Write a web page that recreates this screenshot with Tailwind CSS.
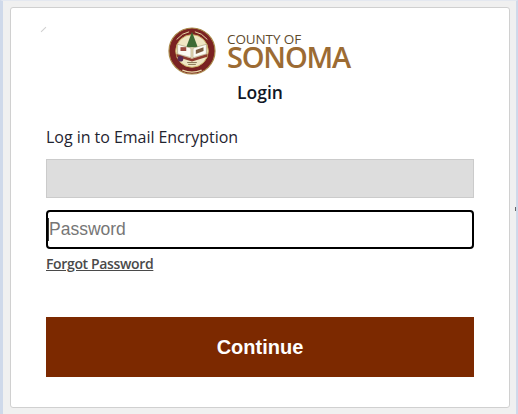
<!DOCTYPE html>
<html>
<head>
<meta charset="utf-8">
<script src="https://cdn.jsdelivr.net/npm/@tailwindcss/browser@4"></script>
</head>
<body class="m-0 bg-[#f0f0f0]">
<div class="relative flex h-[414px] w-[518px] overflow-hidden border-l-[3px] border-r-[2px] border-t-[1px] border-l-[#cfd9ea] border-r-[#cfd9ea] border-t-[#e4e8f0] pl-[7px] pr-[6px] pt-[6px] font-['Open_Sans',sans-serif]">
  <main class="flex h-[401px] w-[500px] flex-col rounded-[3px] border border-[#d0d0d0] bg-white px-[35px]">
    <div class="mt-[17px] flex h-[52px] items-center justify-center gap-[11px]">
      <svg class="h-[48px] w-[48px] shrink-0" viewBox="0 0 50 50">
        <defs><filter id="b" x="-10%" y="-10%" width="120%" height="120%"><feGaussianBlur stdDeviation="0.45"/></filter></defs>
        <g filter="url(#b)">
          <circle cx="25" cy="25" r="24" fill="#7a2420"/>
          <circle cx="25" cy="25" r="24" fill="none" stroke="#a98a4a" stroke-width="1.2"/>
          <circle cx="25" cy="25" r="17" fill="#efe6c4" stroke="#c9ad62" stroke-width="1"/>
          <path d="M25 5 L31 21 H19 Z" fill="#3d6b35"/>
          <path d="M10 18 L24 22 V32 L10 28 Z" fill="#fbfaf3" stroke="#8d7b55" stroke-width=".5"/>
          <path d="M40 18 L26 22 V32 L40 28 Z" fill="#fbfaf3" stroke="#8d7b55" stroke-width=".5"/>
          <rect x="13" y="21" width="6" height="4" fill="#9a4b40"/>
          <path d="M29 24 L37 21 V25 L29 28 Z" fill="#7b5b40"/>
          <path d="M9 28 L25 33 L41 28 V31 L25 36 L9 31 Z" fill="#8e3a2e"/>
          <circle cx="13" cy="33" r="3" fill="#5a2a52"/>
          <path d="M20 37 H30 M21 39 H29" stroke="#6d5a3a" stroke-width=".8"/>
          <path d="M15 45 Q25 49 35 45" fill="none" stroke="#e8d9a8" stroke-width="1.4"/>
          <path d="M9 13 Q15 6 22 5" fill="none" stroke="#e8d9a8" stroke-width="1"/>
          <path d="M28 5 Q35 6 41 13" fill="none" stroke="#e8d9a8" stroke-width="1"/>
        </g>
      </svg>
      <div class="mb-[4px] flex w-[125px] flex-col">
        <span class="text-[13.5px] leading-[16px] tracking-[-0.1px] text-[#5e4a2c]">COUNTY OF</span>
        <span class="text-[29px] leading-[20px] font-semibold tracking-[-1.2px] text-[#9c6b33]">SONOMA</span>
      </div>
    </div>
    <h1 class="mt-[3px] text-center text-[17.5px] leading-[24px] font-semibold text-[#111827]">Login</h1>
    <p class="mt-[21px] text-[16px] leading-[24px] tracking-[-0.04px] text-[#1f2430]">Log in to Email Encryption</p>
    <div class="mt-[10px] h-[39px] border border-[#cbcbcb] bg-[#dddddd]"></div>
    <div class="mt-[12px] flex h-[39px] items-center rounded-[4px] border-[2px] border-black">
      <span class="h-[23px] w-px bg-[#333]"></span>
      <span class="text-[17.5px] font-['Liberation_Sans',sans-serif] text-[#767676]">Password</span>
    </div>
    <a class="mt-[5px] text-[14px] leading-[20px] font-semibold tracking-[-0.35px] text-[#4a4a4a] underline">Forgot Password</a>
    <button class="mt-[43px] h-[60px] w-full bg-[#7c2900] text-[20px] font-bold text-white font-['Liberation_Sans',sans-serif]">Continue</button>
  </main>
  <span class="absolute right-[-2px] top-[206px] h-[4px] w-[3px] border border-[#666] bg-white"></span>
  <span class="absolute left-[37px] top-[28px] h-px w-[7px] -rotate-45 bg-[#cfcfcf]"></span>
</div>
</body>
</html>
